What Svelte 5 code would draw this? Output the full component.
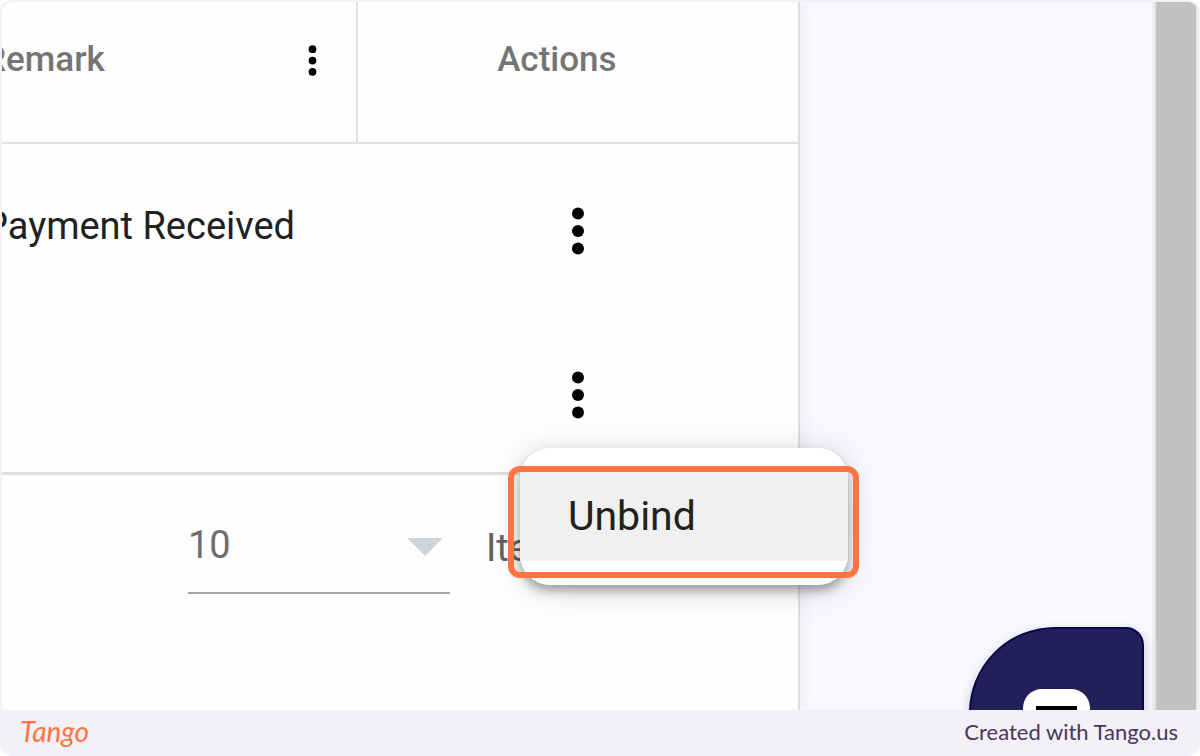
<script lang="ts">
  type Row = { id: number; remark: string };

  const rows: Row[] = [
    { id: 1, remark: 'Payment Received' },
    { id: 2, remark: '' },
  ];

  const PAGE_SIZES = [10, 20, 50];

  let pageSize = $state(10);
  let openRowId = $state<number | null>(2);

  function toggleMenu(id: number) {
    openRowId = openRowId === id ? null : id;
  }
</script>

{#snippet dots(size: number)}
  <svg width={size} height={size} viewBox="0 0 48 48" aria-hidden="true">
    <circle cx="24" cy="6.5" r="6" />
    <circle cx="24" cy="24" r="6" />
    <circle cx="24" cy="41.5" r="6" />
  </svg>
{/snippet}

<div class="frame">
  <main class="shot">
    <section class="panel">
      <table>
        <thead>
          <tr>
            <th class="remark-col">
              <div class="head">
                <span>Remark</span>
                <button class="icon-btn" aria-label="Remark column options">{@render dots(31)}</button>
              </div>
            </th>
            <th class="actions-col">Actions</th>
          </tr>
        </thead>
        <tbody>
          {#each rows as row (row.id)}
            <tr>
              <td>{row.remark}</td>
              <td class="actions">
                <div class="menu-anchor">
                  <button class="icon-btn row-btn" aria-label="Row actions" onclick={() => toggleMenu(row.id)}>
                    {@render dots(48)}
                  </button>
                  {#if openRowId === row.id}
                    <div class="menu" role="menu">
                      <button class="menu-item" role="menuitem">Unbind</button>
                    </div>
                  {/if}
                </div>
              </td>
            </tr>
          {/each}
        </tbody>
      </table>

      <div class="pager">
        <div class="select">
          <select id="page-size" bind:value={pageSize}>
            {#each PAGE_SIZES as size}
              <option value={size}>{size}</option>
            {/each}
          </select>
          <svg width="36" height="18" viewBox="0 0 36 18" aria-hidden="true">
            <path d="M0 0h36L18 18z" />
          </svg>
        </div>
        <label for="page-size">Items</label>
      </div>
    </section>

    <div class="gutter"></div>
    <div class="scrollbar"></div>

    <button class="chat" aria-label="Open chat">
      <svg width="67" height="64" viewBox="0 0 67 64" aria-hidden="true">
        <rect width="67" height="64" rx="19" fill="#fff" />
        <path d="M13 19h41M13 34h41" stroke="#000" stroke-width="4" />
      </svg>
    </button>
  </main>

  <footer>
    <a class="brand" href="#tango">Tango</a>
    <span>Created with Tango.us</span>
  </footer>
</div>

<style>
  :global(body) {
    margin: 0;
    background: #fff;
  }

  .frame {
    box-sizing: border-box;
    min-height: 100vh;
    display: flex;
    flex-direction: column;
    padding: 2px 2px 0;
    background: #f3f0f6;
    border-radius: 12px;
    overflow: hidden;
    font-family: Roboto, 'Liberation Sans', sans-serif;
  }

  .shot {
    position: relative;
    flex: 1;
    display: grid;
    grid-template-columns: minmax(0, 9fr) minmax(0, 4fr) 44px;
    border-radius: 10px 10px 0 0;
    overflow: hidden;
    background: #f8f9fe;
  }

  .panel {
    position: relative;
    z-index: 1;
    box-sizing: border-box;
    background: #fefefe;
    border-right: 2px solid #dedede;
    box-shadow: 2px 0 16px rgba(0, 0, 0, 0.06);
  }

  /* the table is scrolled a little past the left edge */
  table {
    width: calc(100% + 18px);
    margin-left: -18px;
    table-layout: fixed;
    border-collapse: separate;
    border-spacing: 0;
    border-bottom: 3px solid #e0e0e0;
    font-size: 38px;
    color: #212121;
  }

  th {
    box-sizing: border-box;
    height: 142px;
    padding: 38px 0 0;
    vertical-align: top;
    border-bottom: 2px solid #e0e0e0;
    font-size: 35px;
    font-weight: 500;
    line-height: 40px;
    color: #757575;
  }

  .remark-col {
    width: 46%;
    padding-right: 28px;
    border-right: 2px solid #e0e0e0;
  }

  .actions-col {
    padding-right: 42px;
  }

  .head {
    display: flex;
    align-items: center;
    justify-content: space-between;
  }

  td {
    height: 164px;
    padding: 0;
    vertical-align: middle;
  }

  .actions {
    text-align: center;
  }

  .icon-btn {
    display: block;
    padding: 0;
    border: none;
    background: transparent;
    cursor: pointer;
  }

  .icon-btn svg {
    display: block;
  }

  .menu-anchor {
    position: relative;
    width: 48px;
    margin: 0 auto;
    padding-top: 10px;
  }

  .row-btn {
    padding: 8px 0;
  }

  .menu {
    position: absolute;
    top: calc(100% + 21px);
    left: -34px;
    width: 328px;
    box-sizing: border-box;
    padding: 24px 0;
    background: #fff;
    border-radius: 30px;
    box-shadow:
      0 6px 10px rgba(0, 0, 0, 0.3),
      0 4px 32px rgba(0, 0, 0, 0.16);
  }

  .menu-item {
    position: relative;
    display: block;
    width: 100%;
    height: 89px;
    padding: 0 48px 2px;
    border: none;
    background: #f0f0f0;
    font-family: inherit;
    font-size: 41px;
    text-align: left;
    color: #212121;
    cursor: pointer;
  }

  .menu-item::after {
    content: '';
    position: absolute;
    inset: -6px -11px -17px -12px;
    border: 6px solid #ff7442;
    border-radius: 12px;
  }

  .pager {
    display: flex;
    align-items: center;
    gap: 36px;
    padding: 26px 0 0 186px;
    font-size: 38px;
    color: #616161;
  }

  .select {
    display: grid;
    align-items: center;
    width: 262px;
    height: 91px;
    border-bottom: 2px solid #a6a6a6;
  }

  .select select,
  .select svg {
    grid-area: 1 / 1;
  }

  .select select {
    appearance: none;
    width: 100%;
    height: 91px;
    padding: 0 0 4px;
    border: none;
    background: transparent;
    font: inherit;
    color: #6e6e6e;
  }

  .select svg {
    justify-self: end;
    margin-right: 7px;
    fill: #ced4db;
    pointer-events: none;
  }

  .gutter {
    border-right: 2px solid #eee;
  }

  .scrollbar {
    background: #c1c1c1;
    border-left: 2px solid #e4e4e4;
    border-right: 2px solid #e8e8ea;
  }

  .chat {
    position: absolute;
    right: 54px;
    bottom: -92px;
    box-sizing: border-box;
    width: 175px;
    height: 175px;
    padding: 0;
    border: 2px solid #08044e;
    border-radius: 86px 18px 86px 86px;
    background: #231f59;
    box-shadow: 0 4px 12px rgba(0, 0, 0, 0.2);
    cursor: pointer;
  }

  .chat svg {
    display: block;
    margin: 12px auto 0;
  }

  footer {
    box-sizing: border-box;
    display: flex;
    align-items: center;
    justify-content: space-between;
    height: 46px;
    padding: 0 20px 4px 18px;
    font-family: Lato, sans-serif;
    font-size: 22px;
    color: #4a365c;
  }

  .brand {
    font-size: 28px;
    font-style: italic;
    font-weight: 400;
    text-decoration: none;
    color: #ff7442;
  }
</style>
